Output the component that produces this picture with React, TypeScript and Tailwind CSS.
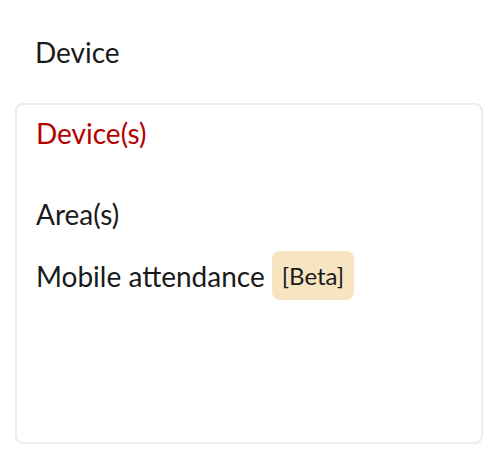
export default function App() {
  return (
    <div className="w-[502px] h-[456px] bg-white" style={{ fontFamily: "Lato, 'Open Sans', sans-serif" }}>
      <div className="px-[15px] pt-[32px]">
        <div className="pl-[20px] text-[28px] leading-[40px] text-[#1a1a1a]">Device</div>
        <div className="mt-[31px] h-[341px] w-[468px] rounded-[8px] border-2 border-[#ececec] px-[19px] pt-[8px]">
          <div className="text-[28px] leading-[40px] text-[#b50000]">Device(s)</div>
          <div className="mt-[41px] text-[28px] leading-[40px] text-[#1a1a1a]">Area(s)</div>
          <div className="mt-[17px] flex items-center gap-[7px] text-[28px] leading-[40px] text-[#1a1a1a]">
            <span>Mobile attendance</span>
            <span className="rounded-[8px] bg-[#f7e5c2] px-[10px] py-[8px] text-[24px] leading-[33px]">[Beta]</span>
          </div>
        </div>
      </div>
    </div>
  );
}
